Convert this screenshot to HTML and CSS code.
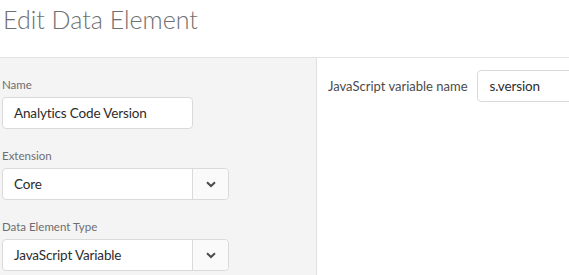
FILE: index.html
```html
<!DOCTYPE html>
<html>
<head>
<meta charset="utf-8">
<link rel="stylesheet" href="styles.css">
</head>
<body>
<header class="header">
  <h1 class="title">Edit Data Element</h1>
</header>
<main class="main">
  <section class="side">
    <div class="field">
      <label class="label">Name</label>
      <div class="textbox name-box">Analytics Code Version</div>
    </div>
    <div class="field">
      <label class="label">Extension</label>
      <div class="select">
        <div class="select-value">Core</div>
        <div class="select-btn">
          <svg width="10" height="7" viewBox="0 0 10 7"><path d="M1 1.2 L5 5 L9 1.2" fill="none" stroke="#4b4b4b" stroke-width="2"/></svg>
        </div>
      </div>
    </div>
    <div class="field">
      <label class="label">Data Element Type</label>
      <div class="select">
        <div class="select-value">JavaScript Variable</div>
        <div class="select-btn">
          <svg width="10" height="7" viewBox="0 0 10 7"><path d="M1 1.2 L5 5 L9 1.2" fill="none" stroke="#4b4b4b" stroke-width="2"/></svg>
        </div>
      </div>
    </div>
  </section>
  <section class="content">
    <div class="row">
      <span class="row-label">JavaScript variable name</span>
      <div class="textbox var-box">s.version</div>
    </div>
  </section>
</main>
</body>
</html>
```
FILE: styles.css
```css
* { box-sizing: border-box; }
html, body { margin: 0; padding: 0; background: #fff; }
body {
  font-family: Lato, "Open Sans", sans-serif;
  color: #2c2c2c;
  width: 569px;
  height: 275px;
  overflow: hidden;
}
.header {
  height: 58px;
  border-bottom: 1px solid #e3e3e3;
  padding: 4px 0 0 3px;
}
.title {
  margin: 0;
  font-family: Lato, sans-serif;
  font-weight: 300;
  font-size: 25px;
  line-height: 30px;
  color: #6f6f6f;
}
.main {
  display: flex;
  height: 217px;
}
.side {
  width: 317px;
  flex: none;
  background: #f4f4f4;
  border-right: 1px solid #e1e1e1;
  padding: 19px 0 0 2px;
  display: flex;
  flex-direction: column;
  gap: 19px;
}
.field { display: flex; flex-direction: column; align-items: flex-start; }
.label {
  font-size: 11.5px;
  line-height: 16px;
  color: #6e6e6e;
  margin-bottom: 4px;
}
.textbox {
  height: 32px;
  background: #fff;
  border: 1px solid #dadada;
  border-radius: 4px;
  font-size: 13.5px;
  letter-spacing: -0.15px;
  line-height: 30px;
  padding: 0 11px;
  color: #2c2c2c;
  white-space: nowrap;
}
.name-box { width: 191px; }
.select {
  display: flex;
  width: 227px;
  height: 32px;
  background: #fff;
  border: 1px solid #dadada;
  border-radius: 4px;
}
.select-value {
  flex: 1;
  font-size: 13.5px;
  letter-spacing: -0.15px;
  line-height: 30px;
  padding: 0 11px;
  border-right: 1px solid #dadada;
}
.select-btn {
  width: 35px;
  display: flex;
  align-items: center;
  justify-content: center;
  background: #fafafa;
  border-radius: 0 4px 4px 0;
}
.content {
  flex: 1;
  min-width: 0;
  overflow: hidden;
  padding: 12px 0 0 11px;
}
.row { display: flex; align-items: center; gap: 9px; }
.row-label {
  flex: none;
  white-space: nowrap;
  font-size: 13px;
  color: #4b4b4b;
}
.var-box { flex: none; width: 160px; padding-left: 12px; }
```
